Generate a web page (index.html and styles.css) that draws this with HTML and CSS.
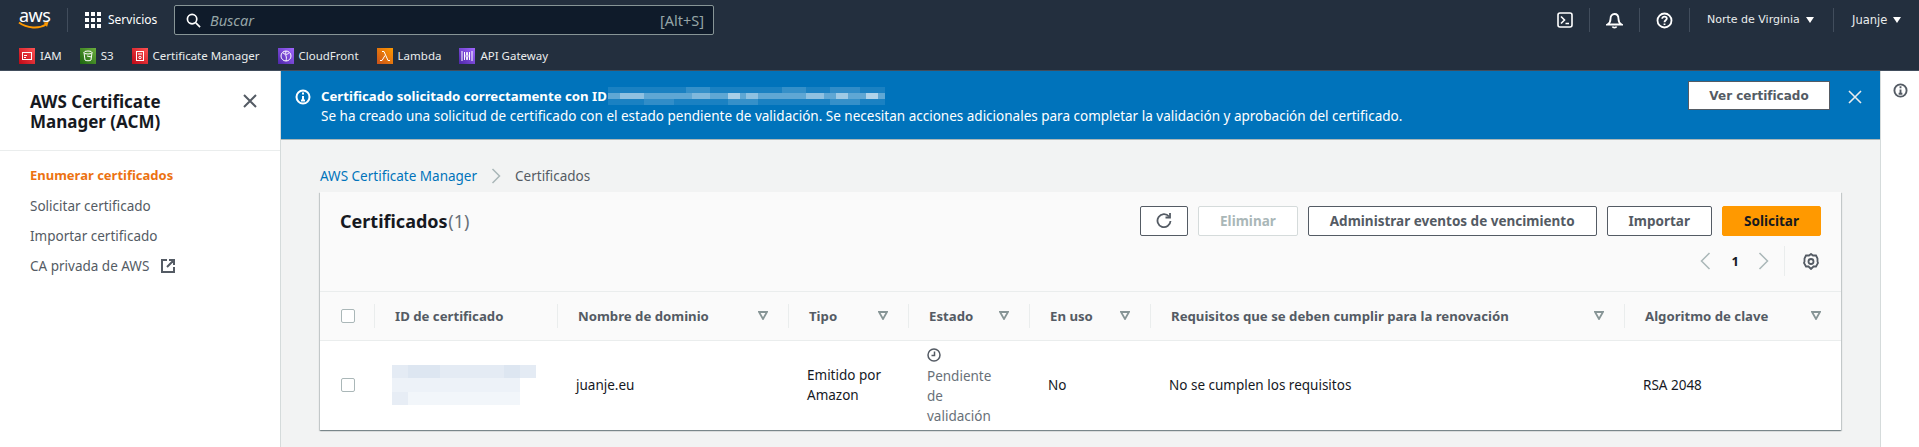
FILE: index.html
```html
<!DOCTYPE html>
<html lang="es">

<head>
    <meta charset="UTF-8">
    <meta name="viewport" content="width=device-width, initial-scale=1.0">
    <title>Certificados | AWS Certificate Manager</title>
    <link rel="stylesheet" href="styles.css">
</head>

<body>

    <header class="topbar">
        <div class="topbar-main">
            <div class="logo">
                <span class="logo-text">aws</span>
                <svg class="logo-smile" width="32" height="9" viewBox="0 0 32 9"><path d="M1 1.500C9 7.500 21 8 28 3.500" fill="none" stroke="#f90" stroke-width="2"/><path d="M25.500 1.500L30.500 1L29 6" fill="#f90"/></svg>
            </div>
            <div class="services">
                <svg width="16" height="16" viewBox="0 0 16 16" fill="#fff"><rect width="4" height="4"/><rect x="6" width="4" height="4"/><rect x="12" width="4" height="4"/><rect y="6" width="4" height="4"/><rect x="6" y="6" width="4" height="4"/><rect x="12" y="6" width="4" height="4"/><rect y="12" width="4" height="4"/><rect x="6" y="12" width="4" height="4"/><rect x="12" y="12" width="4" height="4"/></svg>
                <span>Servicios</span>
            </div>
            <div class="search">
                <svg width="15" height="15" viewBox="0 0 16 16" fill="none" stroke="#fff" stroke-width="1.800"><circle cx="6.500" cy="6.500" r="5"/><path d="M10.500 10.500L15 15"/></svg>
                <span class="search-hint">Buscar</span>
                <span class="search-key">[Alt+S]</span>
            </div>
            <div class="top-actions">
                <span class="top-icon">
                    <svg width="16" height="16" viewBox="0 0 16 16" fill="none" stroke="#fff" stroke-width="1.600"><rect x="1" y="1" width="14" height="14" rx="2"/><path d="M4 4.500L7.500 8L4 11.500M8.500 11.500H12"/></svg>
                </span>
                <span class="top-icon">
                    <svg width="17" height="17" viewBox="0 0 17 17" fill="none" stroke="#fff" stroke-width="1.800"><path d="M1.500 12.500C4 11 4.500 9 4.500 7C4.500 4 6 2 8.500 2S12.500 4 12.500 7C12.500 9 13 11 15.500 12.500Z" fill="#232f3e"/><path d="M6.500 14.500C7 16 10 16 10.500 14.500"/></svg>
                </span>
                <span class="top-icon">
                    <svg width="17" height="17" viewBox="0 0 17 17" fill="none" stroke="#fff" stroke-width="1.800"><circle cx="8.500" cy="8.500" r="7"/><path d="M6.200 6.700C6.200 3.800 10.800 4 10.800 6.600C10.800 8.300 8.500 8.300 8.500 10.200"/><path d="M8.500 11.500V13"/></svg>
                </span>
                <span class="top-menu region">Norte de Virginia<i class="caret"></i></span>
                <span class="top-menu user">Juanje<i class="caret"></i></span>
            </div>
        </div>
        <div class="favorites">
            <span class="fav"><i class="fav-icon red"><svg width="16" height="16" viewBox="0 0 16 16" fill="none" stroke="#fff"><rect x="3.500" y="4.500" width="9" height="7"/><path d="M5 7.500H8M5 9.500H7"/></svg></i>IAM</span>
            <span class="fav"><i class="fav-icon green"><svg width="16" height="16" viewBox="0 0 16 16" fill="none" stroke="#fff"><ellipse cx="8" cy="4.500" rx="4" ry="1.500"/><path d="M4 4.500L5 12C5.500 13 10.500 13 11 12L12 4.500M7 8L11.500 9"/></svg></i>S3</span>
            <span class="fav"><i class="fav-icon red"><svg width="16" height="16" viewBox="0 0 16 16" fill="none" stroke="#fff"><rect x="4.500" y="3.500" width="7" height="9"/><path d="M6 6H10"/><circle cx="8" cy="9.500" r="1.200"/></svg></i>Certificate Manager</span>
            <span class="fav"><i class="fav-icon purple"><svg width="16" height="16" viewBox="0 0 16 16" fill="none" stroke="#fff"><circle cx="8" cy="8" r="5"/><path d="M5 5C8 6 9 9 8 13M11 5C9 6 7 9 8 3"/></svg></i>CloudFront</span>
            <span class="fav"><i class="fav-icon orange"><svg width="16" height="16" viewBox="0 0 16 16" fill="none" stroke="#fff"><path d="M5 3.500H7L11 12.500H13M8 7.500L5 12.500H3"/></svg></i>Lambda</span>
            <span class="fav"><i class="fav-icon purple"><svg width="16" height="16" viewBox="0 0 16 16" fill="none" stroke="#fff"><path d="M3 3V13M5.500 4V12M10.500 4V12M13 3V13M8 4L7 8L8 12L9 8Z"/></svg></i>API Gateway</span>
        </div>
    </header>

    <div class="layout">
        <aside class="sidebar">
            <div class="sidebar-head">
                <h2>AWS Certificate Manager (ACM)</h2>
                <svg class="sidebar-close" width="16" height="16" viewBox="0 0 16 16" fill="none" stroke="#545b64" stroke-width="2"><path d="M2 2L14 14M14 2L2 14"/></svg>
            </div>
            <nav class="sidebar-nav">
                <a class="active">Enumerar certificados</a>
                <a>Solicitar certificado</a>
                <a>Importar certificado</a>
                <a>CA privada de AWS
                    <svg width="14" height="14" viewBox="0 0 14 14" fill="none" stroke="#545b64" stroke-width="2"><path d="M6 1H1V13H13V8M8 1H13V6M13 1L6 8"/></svg>
                </a>
            </nav>
        </aside>

        <main class="content">
            <section class="banner">
                <svg class="banner-icon" width="16" height="16" viewBox="0 0 16 16" fill="none" stroke="#fff" stroke-width="2"><circle cx="8" cy="8" r="6.500"/><path d="M8 7V12M6 11.500H10M8 3.500V5.500"/></svg>
                <div class="banner-text">
                    <p class="banner-title">Certificado solicitado correctamente con ID
                        <svg class="blur-id" width="277" height="18" viewBox="0 0 277 18" fill="#fff">
                            <rect width="277" height="18" opacity=".1"/>
                            <rect x="78" width="24" height="6" opacity=".12"/><rect x="174" width="24" height="6" opacity=".12"/><rect x="222" width="30" height="6" opacity=".1"/>
                            <rect y="6" width="277" height="6" opacity=".3"/>
                            <rect x="12" y="6" width="24" height="6" opacity=".3"/><rect x="84" y="6" width="18" height="6" opacity=".2"/><rect x="120" y="6" width="12" height="6" opacity=".45"/><rect x="138" y="6" width="12" height="6" opacity=".3"/>
                            <rect x="198" y="6" width="18" height="6" opacity=".3"/><rect x="228" y="6" width="12" height="6" opacity=".4"/><rect x="258" y="6" width="12" height="6" opacity=".5"/>
                            <rect x="36" y="12" width="30" height="6" opacity=".1"/><rect x="120" y="12" width="30" height="6" opacity=".12"/><rect x="222" y="12" width="30" height="6" opacity=".12"/>
                        </svg>
                    </p>
                    <p>Se ha creado una solicitud de certificado con el estado pendiente de validación. Se necesitan acciones adicionales para completar la validación y aprobación del certificado.</p>
                </div>
                <button class="btn-view">Ver certificado</button>
                <svg class="banner-close" width="14" height="14" viewBox="0 0 14 14" fill="none" stroke="#eaeded" stroke-width="1.600"><path d="M1 1L13 13M13 1L1 13"/></svg>
            </section>

            <div class="page">
                <div class="breadcrumb">
                    <a>AWS Certificate Manager</a>
                    <svg width="10" height="16" viewBox="0 0 10 16" fill="none" stroke="#aab7b8" stroke-width="1.500"><path d="M1.500 1L8.500 8L1.500 15"/></svg>
                    <span>Certificados</span>
                </div>

                <section class="card">
                    <div class="card-head">
                        <div class="card-top">
                            <h1>Certificados <span class="count">(1)</span></h1>
                            <div class="actions">
                                <button class="btn btn-icon">
                                    <svg width="16" height="16" viewBox="0 0 16 16" fill="none" stroke="#545b64" stroke-width="1.800"><path d="M13 3.500A6.500 6.500 0 1 0 14.500 8"/><path d="M9.500 4.500H14V0"/></svg>
                                </button>
                                <button class="btn" disabled>Eliminar</button>
                                <button class="btn">Administrar eventos de vencimiento</button>
                                <button class="btn">Importar</button>
                                <button class="btn btn-primary">Solicitar</button>
                            </div>
                        </div>
                        <div class="pager">
                            <svg width="11" height="18" viewBox="0 0 11 18" fill="none" stroke="#aab7b8" stroke-width="1.500"><path d="M9.500 1L1.500 9L9.500 17"/></svg>
                            <b>1</b>
                            <svg width="11" height="18" viewBox="0 0 11 18" fill="none" stroke="#aab7b8" stroke-width="1.500"><path d="M1.500 1L9.500 9L1.500 17"/></svg>
                            <span class="pager-line"></span>
                            <svg width="16" height="17" viewBox="0 0 16 17" fill="none" stroke="#545b64" stroke-width="1.800"><path d="M8 1L10 2.500L13 2.500L14.500 5.500L14.500 8.500L15 10L13 13.500H10.500L8 16L5.500 13.500H3L1 10L1.500 8.500V5.500L3 2.500H6Z"/><circle cx="8" cy="8.500" r="2.500"/></svg>
                        </div>
                    </div>

                    <table class="cert-table">
                        <colgroup>
                            <col class="c-check"><col class="c-id"><col class="c-name"><col class="c-type"><col class="c-state"><col class="c-use"><col class="c-req"><col class="c-algo">
                        </colgroup>
                        <thead>
                            <tr>
                                <th><i class="check"></i></th>
                                <th><div class="th-in">ID de certificado</div></th>
                                <th><div class="th-in">Nombre de dominio<svg class="filter" width="10" height="9" viewBox="0 0 10 9"><path d="M1 1H9L5 8Z"/></svg></div></th>
                                <th><div class="th-in">Tipo<svg class="filter" width="10" height="9" viewBox="0 0 10 9"><path d="M1 1H9L5 8Z"/></svg></div></th>
                                <th><div class="th-in">Estado<svg class="filter" width="10" height="9" viewBox="0 0 10 9"><path d="M1 1H9L5 8Z"/></svg></div></th>
                                <th><div class="th-in">En uso<svg class="filter" width="10" height="9" viewBox="0 0 10 9"><path d="M1 1H9L5 8Z"/></svg></div></th>
                                <th><div class="th-in">Requisitos que se deben cumplir para la renovación<svg class="filter" width="10" height="9" viewBox="0 0 10 9"><path d="M1 1H9L5 8Z"/></svg></div></th>
                                <th><div class="th-in">Algoritmo de clave<svg class="filter" width="10" height="9" viewBox="0 0 10 9"><path d="M1 1H9L5 8Z"/></svg></div></th>
                            </tr>
                        </thead>
                        <tbody>
                            <tr>
                                <td><i class="check"></i></td>
                                <td>
                                    <svg class="blur-cell" width="144" height="40" viewBox="0 0 144 40">
                                        <rect width="144" height="13" fill="#e4ebf4"/>
                                        <rect y="13" width="128" height="14" fill="#edf2f8"/>
                                        <rect y="27" width="128" height="13" fill="#f2f6fa"/>
                                        <rect x="16" width="32" height="13" fill="#dde6f1"/>
                                        <rect x="112" width="16" height="13" fill="#dde6f1"/>
                                        <rect y="27" width="16" height="13" fill="#e7edf5"/>
                                    </svg>
                                </td>
                                <td>juanje.eu</td>
                                <td>Emitido por<br>Amazon</td>
                                <td class="state">
                                    <svg width="14" height="14" viewBox="0 0 14 14" fill="none" stroke="#545b64" stroke-width="1.500"><circle cx="7" cy="7" r="6"/><path d="M7.500 3.500V7.500H4.500"/></svg>
                                    <span>Pendiente de validación</span>
                                </td>
                                <td>No</td>
                                <td>No se cumplen los requisitos</td>
                                <td>RSA 2048</td>
                            </tr>
                        </tbody>
                    </table>
                </section>
            </div>
        </main>

        <aside class="tools">
            <svg width="15" height="15" viewBox="0 0 16 16" fill="none" stroke="#545b64" stroke-width="2"><circle cx="8" cy="8" r="6.500"/><path d="M8 7V12M6 11.500H10M8 3.500V5.500"/></svg>
        </aside>
    </div>

</body>

</html>
```

FILE: styles.css
```css
* {
    box-sizing: border-box;
}

html,
body {
    height: 100%;
}

body {
    margin: 0;
    overflow: hidden;
    display: flex;
    flex-direction: column;
    font-family: "Noto Sans", Arial, sans-serif;
    font-size: 13.500px;
    line-height: 20px;
    color: #16191f;
    background: #fff;
}

p,
h1,
h2 {
    margin: 0;
}

i {
    font-style: normal;
}

/* top navigation */
.topbar {
    height: 71px;
    flex: none;
    background: #232f3e;
    border-bottom: 1px solid #414d5c;
    color: #fff;
}

.topbar-main {
    height: 40px;
    display: flex;
    align-items: center;
    padding-left: 18px;
}

.logo {
    width: 49px;
    height: 22px;
    line-height: 14px;
    border-right: 1px solid #414d5c;
    box-sizing: content-box;
    padding-bottom: 2px;
}

.logo-text {
    display: block;
    font-size: 18px;
    letter-spacing: -.5px;
    padding-left: 1px;
}

.logo-smile {
    display: block;
    margin-top: -1px;
}

.services {
    display: flex;
    align-items: center;
    gap: 7px;
    width: 106px;
    padding-left: 17px;
    font-size: 12px;
}

.search {
    width: 540px;
    height: 30px;
    display: flex;
    align-items: center;
    padding: 0 9px 0 11px;
    background: #0f1b2a;
    border: 1px solid #879596;
    border-radius: 2px;
    color: #95a5a6;
    font-size: 14.500px;
}

.search-hint {
    margin-left: 9px;
    font-style: italic;
}

.search-key {
    margin-left: auto;
}

.top-actions {
    margin-left: auto;
    display: flex;
    align-items: center;
    height: 24px;
}

.top-icon {
    display: flex;
    justify-content: center;
    width: 50px;
    border-right: 1px solid #414d5c;
    height: 24px;
    align-items: center;
}

.top-menu {
    display: flex;
    align-items: center;
    height: 24px;
    font-family: "DejaVu Sans", sans-serif;
    font-size: 11px;
    color: #eaeded;
}

.region {
    width: 144px;
    padding-left: 17px;
    border-right: 1px solid #414d5c;
}

.user {
    width: 85px;
    padding-left: 18px;
    font-size: 11.500px;
}

.caret {
    margin-left: 6px;
    border-left: 4px solid transparent;
    border-right: 4px solid transparent;
    border-top: 6px solid #fff;
}

.favorites {
    height: 30px;
    display: flex;
    align-items: center;
    gap: 18px;
    padding: 2px 0 0 19px;
    font-size: 11.500px;
    color: #eaeded;
}

.fav {
    display: flex;
    align-items: center;
    gap: 5px;
}

.fav-icon {
    display: block;
    width: 16px;
    height: 16px;
}

.fav-icon svg {
    display: block;
}

.red {
    background: linear-gradient(45deg, #bd0816, #ff5252);
}

.green {
    background: linear-gradient(45deg, #1b660f, #6cae3e);
}

.purple {
    background: linear-gradient(45deg, #4d27a8, #a166ff);
}

.orange {
    background: linear-gradient(45deg, #c8511b, #f90);
}

/* page layout */
.layout {
    flex: 1;
    min-height: 0;
    display: flex;
}

.sidebar {
    width: 281px;
    flex: none;
    border-right: 1px solid #d5dbdb;
}

.sidebar-head {
    height: 80px;
    display: flex;
    justify-content: space-between;
    padding: 21px 22px 0 30px;
    border-bottom: 1px solid #eaeded;
}

.sidebar-head h2 {
    width: 170px;
    font-size: 17px;
    line-height: 20px;
    font-weight: 700;
}

.sidebar-close {
    margin-top: 1px;
}

.sidebar-nav {
    display: flex;
    flex-direction: column;
    gap: 10px;
    padding: 14px 30px 0;
    color: #545b64;
}

.sidebar-nav a {
    display: flex;
    align-items: center;
    gap: 12px;
}

.sidebar-nav .active {
    margin-bottom: 1px;
    color: #ec7211;
    font-size: 13px;
    font-weight: 700;
}

.content {
    flex: 1;
    min-width: 0;
    background: #f2f3f3;
}

.tools {
    width: 39px;
    flex: none;
    padding: 12px 0 0 12px;
    border-left: 1px solid #d5dbdb;
}

/* flash banner */
.banner {
    height: 69px;
    display: flex;
    align-items: flex-start;
    padding: 15px 0 0 14px;
    background: #0073bb;
    border-bottom: 1px solid #aab7b8;
    color: #fff;
}

.banner-icon {
    flex: none;
    margin: 3px 10px 0 0;
}

.banner-text {
    flex: 1;
}

.banner-title {
    display: flex;
    align-items: center;
    gap: 1px;
    font-size: 13.200px;
    font-weight: 700;
}

.btn-view {
    width: 142px;
    height: 29px;
    margin: -5px 18px 0 0;
    background: #fff;
    border: 1px solid #545b64;
    color: #545b64;
    font-family: "DejaVu Sans", sans-serif;
    font-size: 12px;
    font-weight: 700;
}

.banner-close {
    margin: 4px 18px 0 0;
}

/* certificates card */
.page {
    padding: 25px 39px 0;
}

.breadcrumb {
    display: flex;
    align-items: center;
    gap: 14px;
    height: 22px;
    color: #545b64;
}

.breadcrumb a {
    color: #0073bb;
}

.card {
    margin-top: 5px;
    background: #fff;
    box-shadow: 0 1px 1px 0 rgba(0, 28, 36, .3), 1px 1px 1px 0 rgba(0, 28, 36, .15), -1px 1px 1px 0 rgba(0, 28, 36, .15);
}

.card-head {
    height: 100px;
    padding: 14px 20px 0;
    background: #fafafa;
    border-bottom: 1px solid #eaeded;
}

.card-top {
    display: flex;
    justify-content: space-between;
    align-items: flex-start;
}

.card-top h1 {
    padding-top: 4px;
    font-size: 18px;
    line-height: 22px;
    word-spacing: -4px;
}

.count {
    font-weight: 400;
    color: #687078;
}

.actions {
    display: flex;
    gap: 10px;
}

.btn {
    min-width: 99px;
    height: 30px;
    padding: 0 21px;
    background: #fff;
    border: 1px solid #545b64;
    border-radius: 2px;
    color: #545b64;
    font-family: inherit;
    font-size: 13.500px;
    font-weight: 700;
}

.btn-icon {
    min-width: 0;
    width: 48px;
    padding: 3px 0 0;
}

.btn:disabled {
    border-color: #d5dbdb;
    color: #aab7b8;
}

.btn-primary {
    background: #f90;
    border-color: #f90;
    color: #16191f;
}

.pager {
    display: flex;
    justify-content: flex-end;
    align-items: center;
    height: 30px;
    margin-top: 10px;
    padding-right: 2px;
    color: #16191f;
}

.pager b {
    margin: 0 19px 0 21px;
    font-size: 13px;
}

.pager-line {
    width: 1px;
    height: 30px;
    margin: 0 18px 0 15px;
    background: #eaeded;
}

.cert-table {
    width: 1521px;
    table-layout: fixed;
    border-collapse: collapse;
}

.c-check {
    width: 54px;
}

.c-id {
    width: 183px;
}

.c-name {
    width: 231px;
}

.c-type {
    width: 120px;
}

.c-state,
.c-use {
    width: 121px;
}

.c-req {
    width: 474px;
}

.c-algo {
    width: 217px;
}

.cert-table th {
    height: 48px;
    padding: 0;
    background: #fafafa;
    border-bottom: 1px solid #eaeded;
    color: #545b64;
    font-size: 13.200px;
    text-align: left;
}

.th-in {
    display: flex;
    justify-content: space-between;
    align-items: center;
    height: 24px;
    padding: 0 20px;
    border-left: 1px solid #eaeded;
}

.filter {
    flex: none;
    fill: none;
    stroke: #879596;
    stroke-width: 1.800;
}

.cert-table td {
    height: 90px;
    padding: 0 19px;
    vertical-align: middle;
}

.cert-table th:first-child,
.cert-table td:first-child {
    padding-left: 21px;
}

.cert-table td:nth-child(2) {
    padding: 0 0 0 18px;
}

.check {
    display: block;
    width: 14px;
    height: 14px;
    background: #fff;
    border: 1px solid #aab7b8;
    border-radius: 2px;
}

.blur-cell {
    display: block;
}

.cert-table .state {
    padding-top: 4px;
    color: #687078;
}

.state svg {
    display: block;
    margin: 0 0 4px;
}

.state span {
    display: block;
    max-width: 70px;
}
```
